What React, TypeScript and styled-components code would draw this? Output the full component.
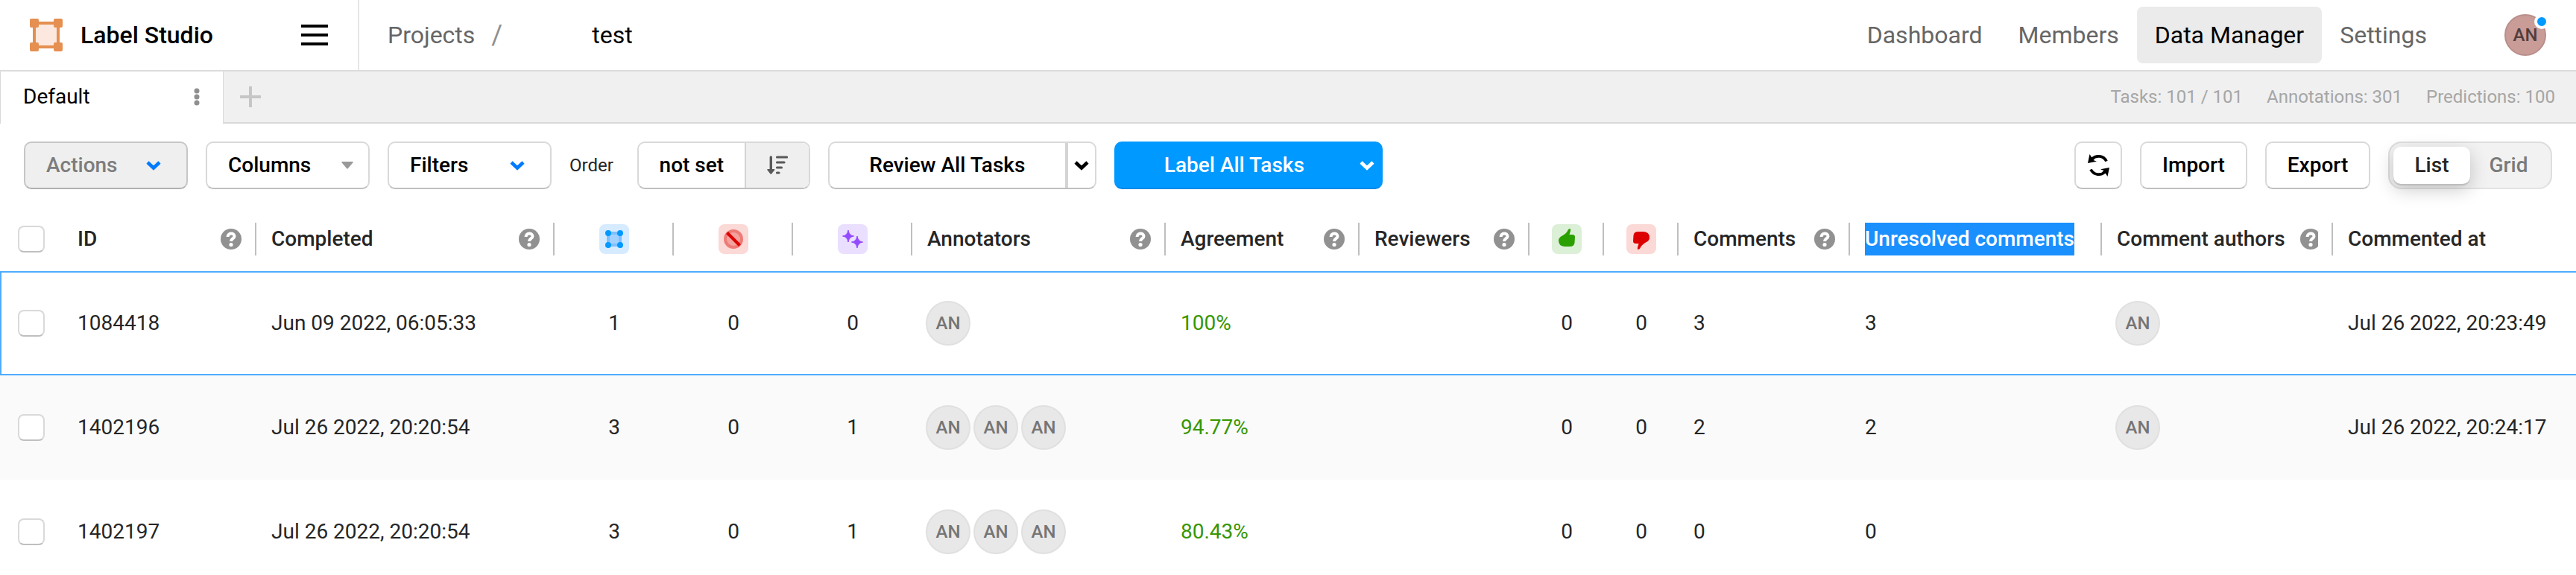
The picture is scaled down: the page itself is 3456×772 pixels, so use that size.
import React from "react";
import styled, { createGlobalStyle, css } from "styled-components";

const Global = createGlobalStyle`
  * { box-sizing: border-box; }
  body { margin: 0; background: #fff; color: #262626; font-family: Roboto, "Liberation Sans", sans-serif; font-size: 28px; line-height: 44px; }
  button { font: inherit; color: inherit; margin: 0; cursor: pointer; }
  a { color: inherit; text-decoration: none; }
`;

const Page = styled.div`
  overflow: hidden;
`;

const Header = styled.header`
  display: flex;
  align-items: stretch;
  height: 96px;
  border-bottom: 2px solid #dcdcdc;
  font-size: 32px;
  color: #666;
`;

const Brand = styled.div`
  display: flex;
  align-items: center;
  width: 482px;
  padding: 0 40px;
  border-right: 2px solid #e6e6e6;
  color: #000;
`;

const BrandName = styled.a`
  flex: 1;
  margin-left: 24px;
  font-weight: 500;
`;

const IconButton = styled.button`
  display: flex;
  padding: 0;
  border: 0;
  background: none;
`;

const Crumbs = styled.nav`
  display: flex;
  flex: 1;
  align-items: center;
  padding-left: 38px;
`;

const Slash = styled.span`
  margin-left: 22px;
  font-size: 36px;
  color: #8f8f8f;
`;

const Current = styled.span`
  margin-left: 120px;
  color: #000;
`;

const Nav = styled.nav`
  display: flex;
  align-items: center;
`;

const NavLink = styled.a<{ $active?: boolean }>`
  display: flex;
  align-items: center;
  height: 76px;
  padding: 0 24px;
  border-radius: 8px;
  ${(p) => p.$active && css`background: #ebebeb; color: #000;`}
`;

const UserButton = styled.button`
  position: relative;
  width: 56px;
  height: 56px;
  margin: 0 40px 0 80px;
  padding: 0;
  border: 2px solid #b98f8b;
  border-radius: 50%;
  background: #c99c98;
  color: #503e3c;
  font-size: 24px;
  font-weight: 500;
`;

const Dot = styled.span`
  position: absolute;
  top: -2px;
  right: -6px;
  width: 20px;
  height: 20px;
  border: 4px solid #fff;
  border-radius: 50%;
  background: #0099ff;
`;

const TabBar = styled.div`
  display: flex;
  align-items: stretch;
  height: 70px;
  background: #f0f0f0;
  box-shadow: inset 0 -2px #d9d9d9;
`;

const Tab = styled.div`
  display: flex;
  align-items: center;
  justify-content: space-between;
  width: 300px;
  padding: 0 23px 2px 30px;
  border: solid #d9d9d9;
  border-width: 0 1px;
  background: #fff;
  color: #000;
`;

const TabButton = styled(IconButton)`
  align-items: center;
  padding: 0 8px;
`;

const AddTab = styled(IconButton)`
  align-items: center;
  padding: 0 22px 2px;
`;

const Totals = styled.div`
  display: flex;
  flex: 1;
  align-items: center;
  justify-content: flex-end;
  gap: 32px;
  padding: 0 28px 2px 0;
  font-size: 24px;
  color: #a6a6a6;
`;

const Toolbar = styled.div`
  display: flex;
  align-items: center;
  justify-content: space-between;
  padding: 24px 32px;
`;

const Group = styled.div`
  display: flex;
  align-items: center;
  gap: 24px;
`;

const frame = css`
  height: 64px;
  border: 2px solid #d9d9d9;
  border-bottom-color: #bfbfbf;
  border-radius: 10px;
`;

const Button = styled.button<{ $width: number; $muted?: boolean }>`
  ${frame}
  display: flex;
  align-items: center;
  justify-content: center;
  width: ${(p) => p.$width}px;
  padding: 0;
  background: #fff;
  color: #000;
  font-weight: 500;
  ${(p) => p.$muted && css`background: #efefef; border-color: #c6c6c6 #c6c6c6 #b0b0b0; color: #7d7d7d;`}
`;

const MenuButton = styled(Button)<{ $inset: number }>`
  justify-content: space-between;
  padding: 0 ${(p) => p.$inset}px 0 28px;
`;

const OrderLabel = styled.span`
  margin-right: 8px;
  font-size: 24px;
`;

const Joined = styled.div<{ $primary?: boolean }>`
  ${frame}
  display: flex;
  overflow: hidden;
  color: #000;
  ${(p) => p.$primary && css`background: #0099ff; border-color: #0099ff #0099ff #0088e8; color: #fff;`}
`;

const Part = styled.button<{ $width: number; $divider?: number; $muted?: boolean }>`
  display: flex;
  align-items: center;
  justify-content: center;
  width: ${(p) => p.$width}px;
  padding: 0;
  border: 0 solid #d4d4d4;
  border-left-width: ${(p) => p.$divider || 0}px;
  background: ${(p) => (p.$muted ? "#efefef" : "transparent")};
  font-weight: 500;
`;

const Segments = styled.fieldset`
  ${frame}
  display: flex;
  margin: 0;
  padding: 5px;
  border-color: #dedede #dedede #e3e3e3;
  border-radius: 18px;
  background: #f2f2f2;
`;

const Segment = styled.label<{ $active?: boolean }>`
  display: flex;
  align-items: center;
  justify-content: center;
  width: 103px;
  height: 50px;
  border-radius: 10px;
  color: #7a7a7a;
  font-weight: 500;
  ${(p) => p.$active && css`background: #fff; color: #262626; box-shadow: 0 2px 1px #bdbdbd, 0 8px 24px rgba(0, 0, 0, 0.2);`}
`;

const HiddenRadio = styled.input`
  appearance: none;
  width: 0;
  height: 0;
  margin: 0;
`;

const Table = styled.table`
  width: 100%;
  table-layout: fixed;
  border-collapse: separate;
  border-spacing: 0;
`;

const Head = styled.th`
  height: 86px;
  padding: 0;
  text-align: left;
  font-weight: 500;
`;

const CheckHead = styled(Head)`
  padding-left: 24px;
`;

const HeadInner = styled.div<{ $first?: boolean; $center?: boolean }>`
  display: flex;
  align-items: center;
  height: 44px;
  padding: ${(p) => (p.$center ? "0 0 0 2px" : "0 18px 0 20px")};
  border-left: 2px solid ${(p) => (p.$first ? "transparent" : "#bfbfbf")};
  white-space: nowrap;
`;

const HeadContent = styled.div<{ $center?: boolean }>`
  display: flex;
  flex: 1;
  align-items: center;
  justify-content: ${(p) => (p.$center ? "center" : "space-between")};
  gap: 20px;
  min-width: 0;
  overflow: hidden;
`;

const Title = styled.span<{ $selected?: boolean }>`
  flex: none;
  ${(p) => p.$selected && css`background: #1a90ff; color: #fff;`}
`;

const Badge = styled.span<{ $color: string }>`
  display: flex;
  width: 40px;
  height: 40px;
  border-radius: 8px;
  background: ${(p) => p.$color};
`;

const HelpIcon = styled.svg`
  flex: none;
  width: 28px;
  height: 28px;
`;

const Cell = styled.td<{ $center?: boolean }>`
  height: 140px;
  padding: 0 0 0 ${(p) => (p.$center ? 4 : 22)}px;
  text-align: ${(p) => (p.$center ? "center" : "left")};
  white-space: nowrap;
`;

const CheckCell = styled(Cell)<{ $active?: boolean }>`
  padding-left: ${(p) => (p.$active ? 22 : 24)}px;
`;

const Row = styled.tr<{ $active?: boolean; $shade?: boolean }>`
  background: ${(p) => (p.$shade ? "#fafafa" : "#fff")};
  ${(p) => p.$active && css`
    td { border-top: 2px solid #4fabff; border-bottom: 2px solid #4fabff; }
    td:first-child { border-left: 2px solid #4fabff; }
  `}
`;

const Check = styled.input`
  appearance: none;
  display: block;
  width: 36px;
  height: 36px;
  margin: 0;
  border: 2px solid #d9d9d9;
  border-bottom-color: #bfbfbf;
  border-radius: 8px;
  background: #fff;
`;

const Percent = styled.span`
  color: #389600;
`;

const People = styled.div`
  display: flex;
  gap: 4px;
  margin-left: -2px;
`;

const Person = styled.span`
  display: flex;
  align-items: center;
  justify-content: center;
  width: 60px;
  height: 60px;
  border: 2px solid #e0e0e0;
  border-radius: 50%;
  background: #e8e8e8;
  color: #757575;
  font-size: 24px;
  font-weight: 500;
`;

const Logo = () => (
  <svg width="44" height="44" viewBox="0 0 44 44" aria-hidden="true">
    <path d="M6 6H38V38H6Z" fill="#fce8df" stroke="#e58f51" strokeWidth="4" />
    <g fill="#e58f51">
      <rect width="12" height="12" rx="2" />
      <rect x="32" width="12" height="12" rx="2" />
      <rect y="32" width="12" height="12" rx="2" />
      <rect x="32" y="32" width="12" height="12" rx="2" />
    </g>
  </svg>
);

const Chevron = ({ color = "currentColor" }: { color?: string }) => (
  <svg width="20" height="14" viewBox="0 0 20 14" fill="none" aria-hidden="true">
    <path d="M2 3L10 10.500L18 3" stroke={color} strokeWidth="4.600" />
  </svg>
);

const Caret = () => (
  <svg width="16" height="10" viewBox="0 0 16 10" aria-hidden="true">
    <path d="M1 0H15Q16.500 0 15.500 1.200L9 9Q8 10.500 7 9L0.500 1.200Q-0.500 0 1 0Z" fill="#999" />
  </svg>
);

const Help = () => (
  <HelpIcon viewBox="0 0 28 28" role="img" aria-label="Help">
    <circle cx="14" cy="14" r="14" fill="#919191" />
    <path d="M9.500 11C9.500 5 18.500 5.300 18.500 10.200C18.500 13.200 14 13 14 17" fill="none" stroke="#fff" strokeWidth="4" />
    <circle cx="14" cy="21.500" r="2.600" fill="#fff" />
  </HelpIcon>
);

const SortIcon = () => (
  <svg width="28" height="26" viewBox="0 0 28 26" aria-hidden="true">
    <path d="M5.300 2V20" stroke="#595959" strokeWidth="3.400" strokeLinecap="round" />
    <path d="M1 18H9.600Q11 18 10 19.500L6.300 24.200Q5.300 25.200 4.300 24.200L0.600 19.500Q-0.400 18 1 18Z" fill="#595959" />
    <path d="M13.500 2H26.500M13.500 9H23M13.500 16H19.500M13.500 23H16" stroke="#595959" strokeWidth="3.200" strokeLinecap="round" />
  </svg>
);

const RefreshIcon = () => (
  <svg width="29" height="30" viewBox="0 0 29 30" aria-hidden="true">
    <path d="M5.500 6.500C11 1 21 1.500 25 9.500M23.300 23.500C18 29 8 28.500 4 20.500" fill="none" stroke="#000" strokeWidth="3.800" />
    <path d="M2.500 0L0 12L12 9.800L7.500 8L10 5.500L5 4ZM26.500 30L29 18L17 20.200L21.500 22L19 24.500L24 26Z" />
  </svg>
);

const RegionIcon = () => (
  <svg width="40" height="40" viewBox="0 0 40 40" role="img" aria-label="Total annotations">
    <path d="M12 12H28V28H12Z" fill="#a3d1ff" stroke="#7dc0ff" strokeWidth="4" />
    <g fill="#0099ff"><circle cx="12" cy="12" r="4" /><circle cx="28" cy="12" r="4" /><circle cx="12" cy="28" r="4" /><circle cx="28" cy="28" r="4" /></g>
  </svg>
);

const CancelIcon = () => (
  <svg width="40" height="40" viewBox="0 0 40 40" role="img" aria-label="Cancelled annotations">
    <circle cx="20" cy="20" r="11" fill="#f4a29d" stroke="#ee7b76" strokeWidth="4" />
    <path d="M11.500 11.500L28.500 28.500" stroke="#dd0000" strokeWidth="4" />
  </svg>
);

const SparkIcon = () => (
  <svg width="40" height="40" viewBox="0 0 40 40" role="img" aria-label="Total predictions">
    <path d="M14 8Q15 15 21.500 16Q15 17 14 24Q13 17 6.500 16Q13 15 14 8ZM26 16Q27 23 33.500 24Q27 25 26 32Q25 25 18.500 24Q25 23 26 16Z" fill="#944bff" stroke="#944bff" />
  </svg>
);

const Thumb = ({ down }: { down?: boolean }) => (
  <svg width="40" height="40" viewBox="0 0 40 40" role="img" aria-label={down ? "Reviews rejected" : "Reviews accepted"}>
    <path
      transform={down ? "rotate(180 20 20)" : undefined}
      fill={down ? "#dd0000" : "#2aa000"}
      d="M21.500 8Q22.500 6 24.500 6Q25.500 6.500 25 9L23.500 14H27Q31 14 31 17L30.500 25Q30 30 24 30H17Q9 29.500 9 22Q9 18 14 15.500Q20 12 21.500 8Z"
    />
  </svg>
);

type Column = { name: string; width?: number; help?: boolean; icon?: React.ReactNode; tint?: string; selected?: boolean };

const columns: Column[] = [
  { name: "ID", width: 260, help: true },
  { name: "Completed", width: 400, help: true },
  { name: "Total annotations", width: 160, icon: <RegionIcon />, tint: "#d6ebff" },
  { name: "Cancelled annotations", width: 160, icon: <CancelIcon />, tint: "#fbd9d6" },
  { name: "Total predictions", width: 160, icon: <SparkIcon />, tint: "#eadfff" },
  { name: "Annotators", width: 340, help: true },
  { name: "Agreement", width: 260, help: true },
  { name: "Reviewers", width: 228, help: true },
  { name: "Reviews accepted", width: 100, icon: <Thumb />, tint: "#dcefd7" },
  { name: "Reviews rejected", width: 100, icon: <Thumb down />, tint: "#fbd9d6" },
  { name: "Comments", width: 230, help: true },
  { name: "Unresolved comments", width: 338, selected: true },
  { name: "Comment authors", width: 310, help: true },
  { name: "Commented at" },
];

const tasks = [
  { id: "1084418", done: "Jun 09 2022, 06:05:33", counts: [1, 0, 0], annotators: 1, agreement: "100%", comments: 3, authors: 1, at: "Jul 26 2022, 20:23:49" },
  { id: "1402196", done: "Jul 26 2022, 20:20:54", counts: [3, 0, 1], annotators: 3, agreement: "94.77%", comments: 2, authors: 1, at: "Jul 26 2022, 20:24:17" },
  { id: "1402197", done: "Jul 26 2022, 20:20:54", counts: [3, 0, 1], annotators: 3, agreement: "80.43%", comments: 0, authors: 0, at: "" },
];

const Persons = ({ count }: { count: number }) => (
  <People>
    {Array.from({ length: count }, (_, i) => <Person key={i}>AN</Person>)}
  </People>
);

export default function App() {
  return (
    <Page>
      <Global />
      <Header>
        <Brand>
          <Logo />
          <BrandName href="#">Label Studio</BrandName>
          <IconButton aria-label="Menu">
            <svg width="36" height="28" viewBox="0 0 36 28"><path d="M0 2H36M0 14H36M0 26H36" stroke="#000" strokeWidth="4" /></svg>
          </IconButton>
        </Brand>
        <Crumbs>
          <a href="#projects">Projects</a>
          <Slash>/</Slash>
          <Current>test</Current>
        </Crumbs>
        <Nav>
          <NavLink href="#dashboard">Dashboard</NavLink>
          <NavLink href="#members">Members</NavLink>
          <NavLink href="#data" $active>Data Manager</NavLink>
          <NavLink href="#settings">Settings</NavLink>
          <UserButton>AN<Dot /></UserButton>
        </Nav>
      </Header>
      <TabBar>
        <Tab>
          Default
          <TabButton aria-label="Tab options">
            <svg width="8" height="24" viewBox="0 0 8 24" fill="#8f8f8f"><circle cx="4" cy="4" r="3.500" /><circle cx="4" cy="12" r="3.500" /><circle cx="4" cy="20" r="3.500" /></svg>
          </TabButton>
        </Tab>
        <AddTab aria-label="Add tab">
          <svg width="28" height="28" viewBox="0 0 28 28"><path d="M14 0V28M0 14H28" stroke="#c6c6c6" strokeWidth="4" /></svg>
        </AddTab>
        <Totals>
          <span>Tasks: 101 / 101</span>
          <span>Annotations: 301</span>
          <span>Predictions: 100</span>
        </Totals>
      </TabBar>
      <Toolbar>
        <Group>
          <MenuButton $width={220} $inset={34} $muted>Actions<Chevron color="#007bff" /></MenuButton>
          <MenuButton $width={220} $inset={20}>Columns<Caret /></MenuButton>
          <MenuButton $width={220} $inset={34}>Filters<Chevron color="#007bff" /></MenuButton>
          <OrderLabel>Order</OrderLabel>
          <Joined>
            <Part $width={142}>not set</Part>
            <Part $width={86} $divider={2} $muted aria-label="Sort direction"><SortIcon /></Part>
          </Joined>
          <Joined>
            <Part $width={316}>Review All Tasks</Part>
            <Part $width={40} $divider={4} aria-label="Review options"><Chevron /></Part>
          </Joined>
          <Joined $primary>
            <Part $width={318}>Label All Tasks</Part>
            <Part $width={38} aria-label="Label options"><Chevron /></Part>
          </Joined>
        </Group>
        <Group>
          <Button $width={64} aria-label="Refresh"><RefreshIcon /></Button>
          <Button $width={144}>Import</Button>
          <Button $width={141}>Export</Button>
          <Segments aria-label="View">
            <Segment $active><HiddenRadio type="radio" name="view" defaultChecked />List</Segment>
            <Segment><HiddenRadio type="radio" name="view" />Grid</Segment>
          </Segments>
        </Group>
      </Toolbar>
      <Table>
        <colgroup>
          <col style={{ width: 82 }} />
          {columns.map((c) => <col key={c.name} style={{ width: c.width }} />)}
        </colgroup>
        <thead>
          <tr>
            <CheckHead><Check type="checkbox" aria-label="Select all tasks" /></CheckHead>
            {columns.map((c, i) => (
              <Head key={c.name}>
                <HeadInner $first={i === 0} $center={!!c.icon}>
                  <HeadContent $center={!!c.icon}>
                    {c.icon ? <Badge $color={c.tint || ""}>{c.icon}</Badge> : <Title $selected={c.selected}>{c.name}</Title>}
                    {c.help && <Help />}
                  </HeadContent>
                </HeadInner>
              </Head>
            ))}
          </tr>
        </thead>
        <tbody>
          {tasks.map((t, i) => (
            <Row key={t.id} $active={i === 0} $shade={i === 1}>
              <CheckCell $active={i === 0}><Check type="checkbox" aria-label={`Select task ${t.id}`} /></CheckCell>
              <Cell>{t.id}</Cell>
              <Cell>{t.done}</Cell>
              {t.counts.map((n, k) => <Cell key={k} $center>{n}</Cell>)}
              <Cell><Persons count={t.annotators} /></Cell>
              <Cell><Percent>{t.agreement}</Percent></Cell>
              <Cell />
              <Cell $center>0</Cell>
              <Cell $center>0</Cell>
              <Cell>{t.comments}</Cell>
              <Cell>{t.comments}</Cell>
              <Cell><Persons count={t.authors} /></Cell>
              <Cell>{t.at}</Cell>
            </Row>
          ))}
        </tbody>
      </Table>
    </Page>
  );
}
